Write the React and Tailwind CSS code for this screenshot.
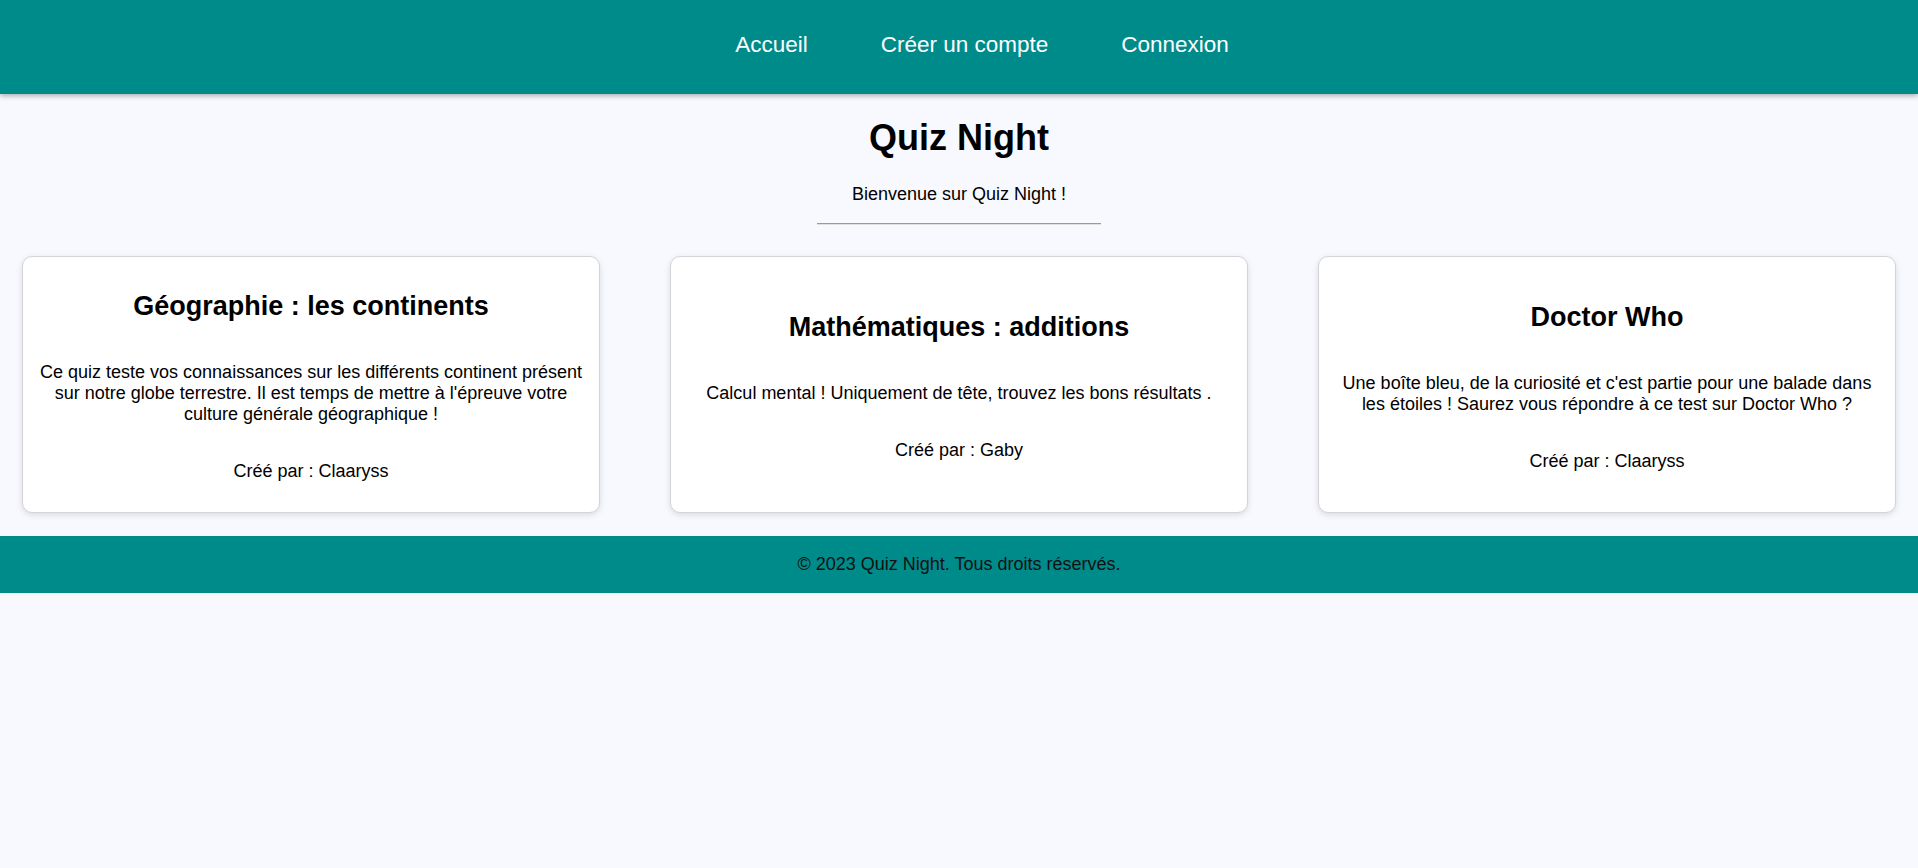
const quizzes = [
  {
    title: 'Géographie : les continents',
    desc: "Ce quiz teste vos connaissances sur les différents continent présent sur notre globe terrestre. Il est temps de mettre à l'épreuve votre culture générale géographique !",
    author: 'Claaryss',
  },
  {
    title: 'Mathématiques : additions',
    desc: 'Calcul mental ! Uniquement de tête, trouvez les bons résultats .',
    author: 'Gaby',
  },
  {
    title: 'Doctor Who',
    desc: "Une boîte bleu, de la curiosité et c'est partie pour une balade dans les étoiles ! Saurez vous répondre à ce test sur Doctor Who ?",
    author: 'Claaryss',
  },
]

function QuizCard({ quiz }) {
  return (
    <div className="w-[578px] bg-white border border-[#d4d4d8] rounded-[10px] shadow-[0_2px_6px_rgba(0,0,0,0.12)] px-[11px] py-[12px] flex flex-col justify-center text-center">
      <h2 className="text-[27px] font-bold leading-[31px] my-[22px]">{quiz.title}</h2>
      <p className="text-[18px] leading-[21px] my-[18px] px-[2px]">{quiz.desc}</p>
      <p className="text-[18px] leading-[21px] my-[18px]">Créé par : {quiz.author}</p>
    </div>
  )
}

export default function App() {
  return (
    <div className="min-h-screen bg-[#f8f8ff] text-black" style={{ fontFamily: '"Liberation Sans", Arial, sans-serif' }}>
      {/* Navigation */}
      <header className="h-[94px] bg-[#008b8b] shadow-[0_2px_5px_rgba(0,0,0,0.3)] flex items-center justify-center pl-[46px] pb-[5px] relative z-10">
        <nav className="flex items-center gap-[73px] text-white text-[22.5px] leading-[26px]">
          <a href="#">Accueil</a>
          <a href="#">Créer un compte</a>
          <a href="#">Connexion</a>
        </nav>
      </header>

      <main className="flex flex-col items-center">
        <h1 className="text-[36px] font-bold leading-[42px] mt-[23px]">Quiz Night</h1>
        <p className="text-[18px] leading-[21px] mt-[25px]">Bienvenue sur Quiz Night !</p>
        <hr className="w-[284px] mt-[18px] border-t border-[#9a9a9a] border-b border-b-[#e0e0e0]" />

        <div className="w-full flex justify-between items-stretch px-[22px] mt-[31px] mb-[23px]">
          {quizzes.map(q => (
            <QuizCard key={q.title} quiz={q} />
          ))}
        </div>
      </main>

      <footer className="bg-[#008b8b] py-[18px] text-center text-[18px] leading-[21px] text-[#111]">
        © 2023 Quiz Night. Tous droits réservés.
      </footer>
    </div>
  )
}
